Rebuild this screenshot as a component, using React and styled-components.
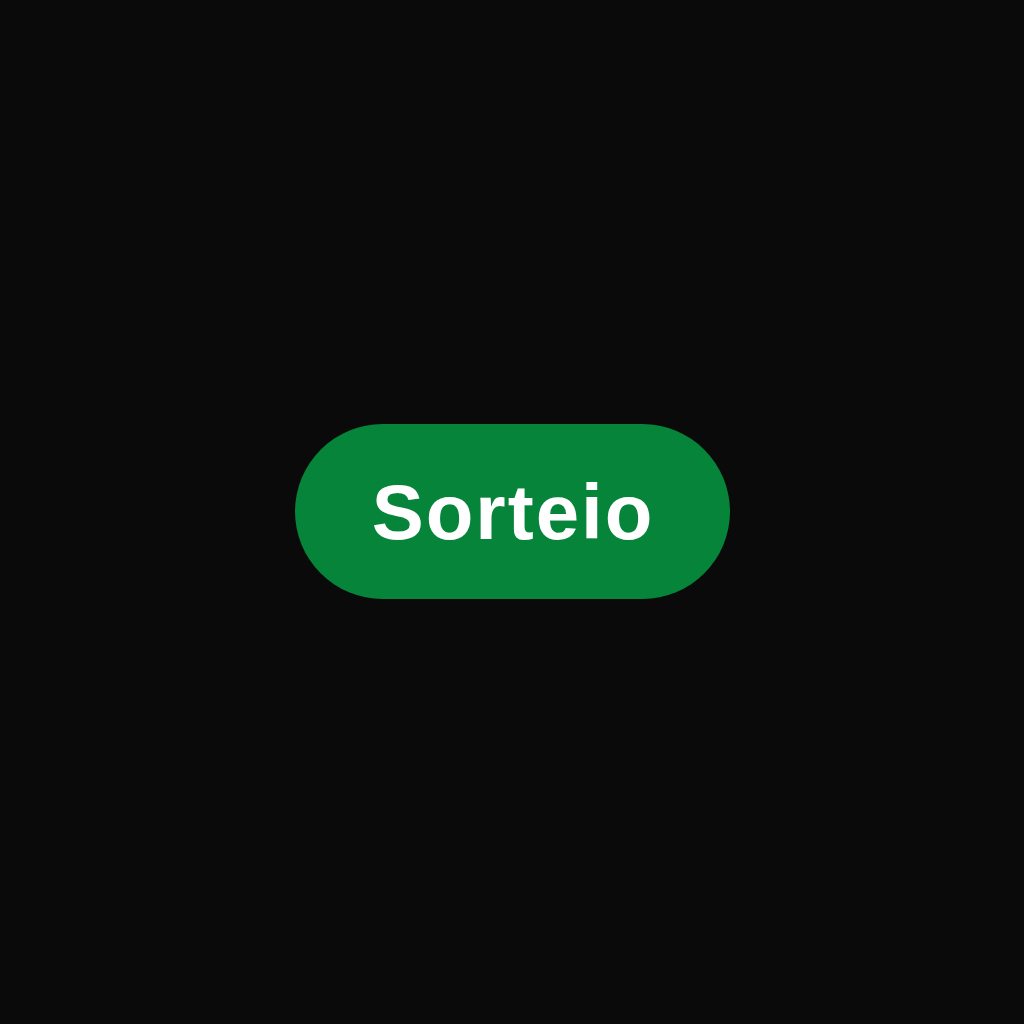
import React from 'react';
import styled, { createGlobalStyle } from 'styled-components';

const GlobalStyle = createGlobalStyle`
  html, body {
    margin: 0;
    padding: 0;
    background: #0a0a0a;
  }
`;

const Screen = styled.main`
  width: 100%;
  height: 1024px;
  display: flex;
  align-items: center;
  justify-content: center;
  background: #0a0a0a;
`;

const Button = styled.button`
  display: flex;
  align-items: center;
  justify-content: center;
  width: 435px;
  height: 175px;
  margin-top: -1px;
  border: none;
  border-radius: 88px;
  background: #06843a;
  color: #fff;
  font-family: 'Liberation Sans', Arial, sans-serif;
  font-weight: 700;
  font-size: 78px;
  letter-spacing: 2px;
  cursor: pointer;
  padding: 2px 0 0 2px;
`;

export default function App() {
  return (
    <Screen>
      <GlobalStyle />
      <Button>Sorteio</Button>
    </Screen>
  );
}
